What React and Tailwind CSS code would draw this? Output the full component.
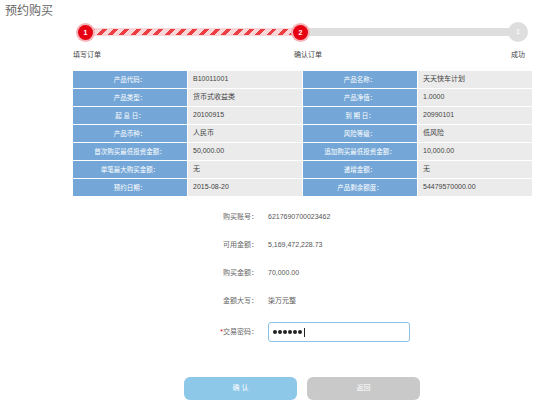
import React from 'react';

const rows = [
  ['产品代码：', 'B10011001', '产品名称：', '天天快车计划'],
  ['产品类型：', '货币式收益类', '产品净值：', '1.0000'],
  ['起 息 日：', '20100915', '到 期 日：', '20990101'],
  ['产品币种：', '人民币', '风险等级：', '低风险'],
  ['首次购买最低投资金额：', '50,000.00', '追加购买最低投资金额：', '10,000.00'],
  ['单笔最大购买金额：', '无', '递增金额：', '无'],
  ['预约日期：', '2015-08-20', '产品剩余额度：', '54479570000.00'],
];

const formRows = [
  ['购买账号：', '6217690700023462'],
  ['可用金额：', '5,169,472,228.73'],
  ['购买金额：', '70,000.00'],
  ['金额大写：', '柒万元整'],
];

// 红色步骤圆点
const RedDot = ({ n }) => (
  <div className="relative z-10 w-[15px] h-[15px] shrink-0 rounded-full bg-[#e60012] ring-2 ring-[#f6b3b8] flex items-center justify-center text-white text-[7px] leading-none font-bold">
    {n}
  </div>
);

export default function App() {
  return (
    <div className="w-[556px] h-[406px] bg-white overflow-hidden font-['Liberation_Sans','Noto_Sans_CJK_SC',sans-serif]">
      <div className="pl-[5px] pt-[3px] text-[12px] leading-[16px] text-[#666]">预约购买</div>

      {/* 进度条 */}
      <div className="flex items-center h-[20px] mt-[3px] ml-[78px] w-[450px]">
        <RedDot n="1" />
        <div className="flex-1 -mx-[2px] h-[6px] bg-[repeating-linear-gradient(135deg,#ec3d43_0_3.5px,#f9d7d9_3.5px_8px)] shadow-[0_0_0_1px_#f9d7d9]" />
        <RedDot n="2" />
        <div className="flex-1 -mx-[2px] h-[8px] bg-[#dedede]" />
        <div className="w-[20px] h-[20px] shrink-0 rounded-full bg-[#dedede] flex items-center justify-center text-white text-[8px] leading-none">
          1
        </div>
      </div>
      <div className="flex justify-between ml-[73px] w-[452px] mt-[8px] text-[7px] leading-[10px] text-[#444]">
        <span>填写订单</span>
        <span className="pl-[4px]">确认订单</span>
        <span>成功</span>
      </div>

      {/* 产品信息表 */}
      <div className="ml-[73px] mt-[11px] w-[459px] grid grid-cols-4 gap-px bg-white">
        {rows.map((r, i) => (
          <React.Fragment key={i}>
            <div className="h-[17px] bg-[#74a7d7] text-white text-[6.5px] flex items-center justify-center">{r[0]}</div>
            <div className="h-[17px] bg-[#ebebeb] text-[#444] text-[7px] flex items-center pl-[5px]">{r[1]}</div>
            <div className="h-[17px] bg-[#74a7d7] text-white text-[6.5px] flex items-center justify-center">{r[2]}</div>
            <div className="h-[17px] bg-[#ebebeb] text-[#444] text-[7px] flex items-center pl-[5px]">{r[3]}</div>
          </React.Fragment>
        ))}
      </div>

      {/* 购买信息 */}
      <div className="mt-[7px] text-[7px] text-[#666]">
        {formRows.map((r) => (
          <div key={r[0]} className="flex items-center h-[28px]">
            <div className="w-[258px] text-right">{r[0]}</div>
            <div className="pl-[10px] text-[#555]">{r[1]}</div>
          </div>
        ))}
        <div className="flex items-center h-[20px] mt-[7px]">
          <div className="w-[258px] text-right">
            <span className="text-[#e60012]">*</span>交易密码：
          </div>
          <div className="ml-[10px] w-[142px] h-[20px] border border-[#8cc3e4] rounded-[3px] flex items-center pl-[4px] gap-[1px]">
            {[0, 1, 2, 3, 4, 5].map((i) => (
              <span key={i} className="w-[4px] h-[4px] rounded-full bg-[#222]" />
            ))}
            <span className="w-px h-[9px] bg-[#222] ml-[1px]" />
          </div>
        </div>
      </div>

      {/* 按钮 */}
      <div className="flex ml-[184px] mt-[35px] gap-[10px]">
        <button className="w-[113px] h-[23px] rounded-[6px] bg-[#8ec8e8] text-white text-[7px]">确 认</button>
        <button className="w-[113px] h-[23px] rounded-[6px] bg-[#c9c9c9] text-white text-[7px]">返回</button>
      </div>
    </div>
  );
}
